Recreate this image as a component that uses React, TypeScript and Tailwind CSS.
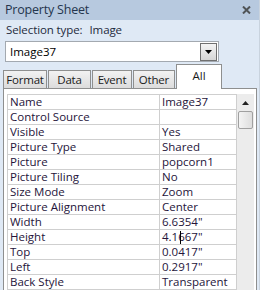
import React from 'react';

const rows: [string, string][] = [
  ['Name', 'Image37'],
  ['Control Source', ''],
  ['Visible', 'Yes'],
  ['Picture Type', 'Shared'],
  ['Picture', 'popcorn1'],
  ['Picture Tiling', 'No'],
  ['Size Mode', 'Zoom'],
  ['Picture Alignment', 'Center'],
  ['Width', '6.6354"'],
  ['Height', '4.1667"'],
  ['Top', '0.0417"'],
  ['Left', '0.2917"'],
  ['Back Style', 'Transparent'],
];

const tabs = ['Format', 'Data', 'Event', 'Other'];
const tabWidths = ['w-[44px]', 'w-[43px]', 'w-[40px]', 'w-[42px]'];

export default function App() {
  return (
    <div className="relative h-[290px] w-[260px] overflow-hidden border-r border-[#c9d3de] bg-[#dfe9f5] font-['Open_Sans',sans-serif] text-[11.5px] text-[#1b2433]">
      {/* title bar */}
      <div className="flex h-[20px] items-center justify-between bg-[#b7c9df] pl-[5px] pr-[8px]">
        <span className="text-[12.5px] leading-none tracking-[-0.2px] text-[#24354d]">Property Sheet</span>
        <svg width="9" height="8" viewBox="0 0 9 8">
          <path d="M1 0.5 L8 7.5 M8 0.5 L1 7.5" stroke="#4f5356" strokeWidth="2" />
        </svg>
      </div>

      {/* selection type */}
      <div className="flex h-[19px] items-center pl-[6px] tracking-[-0.1px] text-[#1e2a3c]">
        <span>Selection type:</span>
        <span className="ml-[7px]">Image</span>
      </div>

      {/* combo */}
      <div className="ml-[5px] mt-[2px] flex h-[21px] w-[214px] items-center justify-between border border-[#a3a9b0] bg-white pl-[4px] pr-[1px]">
        <span className="text-black">Image37</span>
        <div className="flex h-[18px] w-[17px] items-center justify-center border border-[#707070] bg-gradient-to-b from-[#f4f4f4] to-[#d6d6d6]">
          <svg width="7" height="4" viewBox="0 0 7 4">
            <path d="M0 0 H7 L3.5 4 Z" fill="#000" />
          </svg>
        </div>
      </div>

      {/* tabs */}
      <div className="mt-[2px] flex h-[24px] items-end gap-[1px] pl-[3px]">
        {tabs.map((t, i) => (
          <div
            key={t}
            className={`flex h-[18px] ${tabWidths[i]} items-center justify-center border border-b-0 border-[#8e8f8f] bg-gradient-to-b from-[#f2f2f2] to-[#dcdcdc] leading-[16px] tracking-[-0.2px] text-[#1a1a1a]`}
          >
            {t}
          </div>
        ))}
        <div className="relative z-10 -mb-px flex h-[25px] w-[46px] items-start justify-center border border-b-0 border-[#8e8f8f] bg-white pt-[3px] leading-[16px] text-[#1a1a1a]">
          All
        </div>
      </div>

      {/* panel */}
      <div className="ml-[3px] flex h-[210px] w-[254px] items-start border border-[#8e8f8f] bg-white pl-[3px] pt-[5px]">
        <div className="w-[230px] border-l border-t border-[#cfcfcf]">
          {rows.map(([k, v]) => (
            <div key={k} className="grid h-[15px] grid-cols-[152px_77px] leading-[14px]">
              <div className="whitespace-nowrap border-b border-r border-[#cfcfcf] pl-[2px] text-[#25143a]">{k}</div>
              <div className="relative whitespace-nowrap border-b border-r border-[#cfcfcf] pl-[2px] text-[#25143a]">
                {v}
                {k === 'Height' && (
                  <span className="absolute left-[20px] top-[1px] h-[13px] w-px bg-black" />
                )}
              </div>
            </div>
          ))}
        </div>

        {/* scrollbar */}
        <div className="flex h-[205px] w-[17px] flex-col items-center bg-[#ececec]">
          <div className="flex h-[17px] w-full items-center justify-center">
            <svg width="7" height="4" viewBox="0 0 7 4">
              <path d="M0 4 H7 L3.5 0 Z" fill="#222" />
            </svg>
          </div>
          <div className="h-[18px] w-[15px] rounded-[2px] border border-[#a0a0a0] bg-gradient-to-r from-[#f4f4f4] to-[#dedede]" />
        </div>
      </div>
    </div>
  );
}
